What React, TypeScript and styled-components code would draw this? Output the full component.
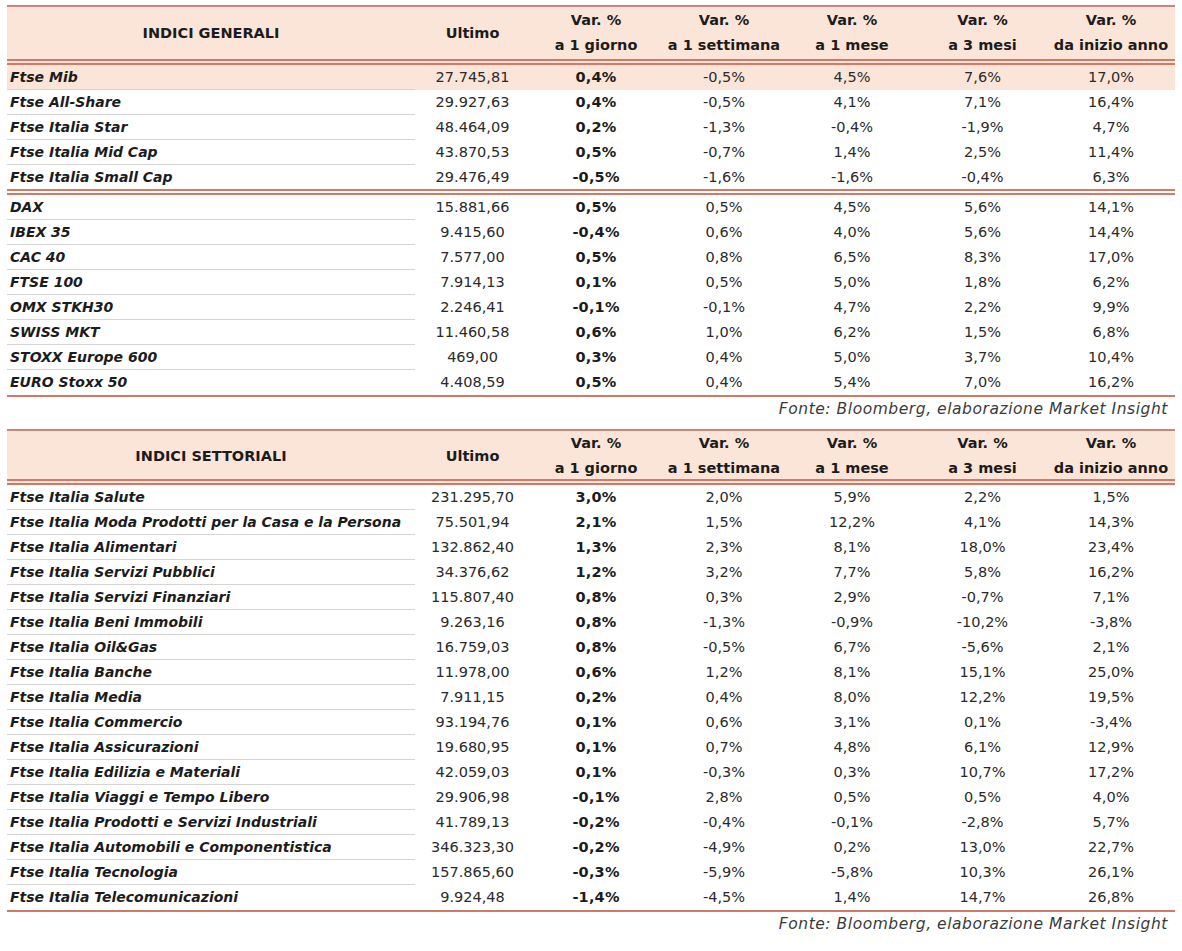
import styled, { createGlobalStyle } from 'styled-components'

const GlobalStyle = createGlobalStyle`
  html, body {
    margin: 0;
    padding: 0;
    background: #ffffff;
  }
  body {
    font-family: 'DejaVu Sans', 'Liberation Sans', sans-serif;
    color: #1c1c1c;
  }
`

const colors = {
  line: '#d27a68',
  lineTop: '#c98677',
  headerBg: '#fbe5d8',
  rowSep: '#d4d4d4',
  text: '#1c1c1c',
  number: '#2a2a2a',
}

const COLS = '408px 115px 132px 124px 132px 129px 128px'

const Page = styled.div`
  width: 1168px;
  padding: 5px 0 0 7px;
  display: flex;
  flex-direction: column;
`

const Table = styled.div`
  display: flex;
  flex-direction: column;
  border-top: 2px solid ${colors.lineTop};
  border-bottom: 2px solid ${colors.line};
`

const HeaderRow = styled.div<{ $height: number }>`
  display: grid;
  grid-template-columns: ${COLS};
  height: ${({ $height }) => $height}px;
  background: ${colors.headerBg};
  border-bottom: 6px double ${colors.line};
`

const HeaderCell = styled.div`
  display: flex;
  flex-direction: column;
  align-items: center;
  justify-content: center;
  font-size: 14.5px;
  font-weight: 700;
  line-height: 25px;
  color: ${colors.text};
  white-space: nowrap;
`

const Row = styled.div<{ $highlight?: boolean; $divider?: boolean }>`
  display: grid;
  grid-template-columns: ${COLS};
  height: ${({ $divider }) => ($divider ? '30px' : '25px')};
  box-sizing: border-box;
  background: ${({ $highlight }) => ($highlight ? colors.headerBg : 'transparent')};
  border-bottom: ${({ $divider }) => ($divider ? `6px double ${colors.line}` : 'none')};
`

const NameCell = styled.div<{ $sep: boolean }>`
  display: flex;
  align-items: center;
  padding-left: 3px;
  box-sizing: border-box;
  height: 25px;
  font-size: 14px;
  font-weight: 700;
  font-style: italic;
  color: ${colors.text};
  white-space: nowrap;
  border-bottom: 1px solid ${({ $sep }) => ($sep ? colors.rowSep : 'transparent')};
`

const NumCell = styled.div<{ $bold?: boolean }>`
  display: flex;
  align-items: center;
  justify-content: center;
  height: 24px;
  font-size: 14.5px;
  font-weight: ${({ $bold }) => ($bold ? 700 : 400)};
  color: ${({ $bold }) => ($bold ? colors.text : colors.number)};
  letter-spacing: ${({ $bold }) => ($bold ? '0.2px' : '0')};
`

const Source = styled.div`
  height: 24px;
  padding-right: 7px;
  display: flex;
  align-items: center;
  justify-content: flex-end;
  font-size: 15.5px;
  letter-spacing: 0.55px;
  font-style: italic;
  color: #3a3a3a;
`

const Spacer = styled.div`
  height: 8px;
`

type Line = [string, string, string, string, string, string, string]

const generali: Line[] = [
  ['Ftse Mib', '27.745,81', '0,4%', '-0,5%', '4,5%', '7,6%', '17,0%'],
  ['Ftse All-Share', '29.927,63', '0,4%', '-0,5%', '4,1%', '7,1%', '16,4%'],
  ['Ftse Italia Star', '48.464,09', '0,2%', '-1,3%', '-0,4%', '-1,9%', '4,7%'],
  ['Ftse Italia Mid Cap', '43.870,53', '0,5%', '-0,7%', '1,4%', '2,5%', '11,4%'],
  ['Ftse Italia Small Cap', '29.476,49', '-0,5%', '-1,6%', '-1,6%', '-0,4%', '6,3%'],
  ['DAX', '15.881,66', '0,5%', '0,5%', '4,5%', '5,6%', '14,1%'],
  ['IBEX 35', '9.415,60', '-0,4%', '0,6%', '4,0%', '5,6%', '14,4%'],
  ['CAC 40', '7.577,00', '0,5%', '0,8%', '6,5%', '8,3%', '17,0%'],
  ['FTSE 100', '7.914,13', '0,1%', '0,5%', '5,0%', '1,8%', '6,2%'],
  ['OMX STKH30', '2.246,41', '-0,1%', '-0,1%', '4,7%', '2,2%', '9,9%'],
  ['SWISS MKT', '11.460,58', '0,6%', '1,0%', '6,2%', '1,5%', '6,8%'],
  ['STOXX Europe 600', '469,00', '0,3%', '0,4%', '5,0%', '3,7%', '10,4%'],
  ['EURO Stoxx 50', '4.408,59', '0,5%', '0,4%', '5,4%', '7,0%', '16,2%'],
]

const settoriali: Line[] = [
  ['Ftse Italia Salute', '231.295,70', '3,0%', '2,0%', '5,9%', '2,2%', '1,5%'],
  ['Ftse Italia Moda Prodotti per la Casa e la Persona', '75.501,94', '2,1%', '1,5%', '12,2%', '4,1%', '14,3%'],
  ['Ftse Italia Alimentari', '132.862,40', '1,3%', '2,3%', '8,1%', '18,0%', '23,4%'],
  ['Ftse Italia Servizi Pubblici', '34.376,62', '1,2%', '3,2%', '7,7%', '5,8%', '16,2%'],
  ['Ftse Italia Servizi Finanziari', '115.807,40', '0,8%', '0,3%', '2,9%', '-0,7%', '7,1%'],
  ['Ftse Italia Beni Immobili', '9.263,16', '0,8%', '-1,3%', '-0,9%', '-10,2%', '-3,8%'],
  ['Ftse Italia Oil&Gas', '16.759,03', '0,8%', '-0,5%', '6,7%', '-5,6%', '2,1%'],
  ['Ftse Italia Banche', '11.978,00', '0,6%', '1,2%', '8,1%', '15,1%', '25,0%'],
  ['Ftse Italia Media', '7.911,15', '0,2%', '0,4%', '8,0%', '12,2%', '19,5%'],
  ['Ftse Italia Commercio', '93.194,76', '0,1%', '0,6%', '3,1%', '0,1%', '-3,4%'],
  ['Ftse Italia Assicurazioni', '19.680,95', '0,1%', '0,7%', '4,8%', '6,1%', '12,9%'],
  ['Ftse Italia Edilizia e Materiali', '42.059,03', '0,1%', '-0,3%', '0,3%', '10,7%', '17,2%'],
  ['Ftse Italia Viaggi e Tempo Libero', '29.906,98', '-0,1%', '2,8%', '0,5%', '0,5%', '4,0%'],
  ['Ftse Italia Prodotti e Servizi Industriali', '41.789,13', '-0,2%', '-0,4%', '-0,1%', '-2,8%', '5,7%'],
  ['Ftse Italia Automobili e Componentistica', '346.323,30', '-0,2%', '-4,9%', '0,2%', '13,0%', '22,7%'],
  ['Ftse Italia Tecnologia', '157.865,60', '-0,3%', '-5,9%', '-5,8%', '10,3%', '26,1%'],
  ['Ftse Italia Telecomunicazioni', '9.924,48', '-1,4%', '-4,5%', '1,4%', '14,7%', '26,8%'],
]

const periods = ['a 1 giorno', 'a 1 settimana', 'a 1 mese', 'a 3 mesi', 'da inizio anno']

function IndexTable({
  title,
  rows,
  headerHeight,
  highlightFirst,
  dividerAfter,
}: {
  title: string
  rows: Line[]
  headerHeight: number
  highlightFirst?: boolean
  dividerAfter?: number
}) {
  return (
    <Table>
      <HeaderRow $height={headerHeight}>
        <HeaderCell>{title}</HeaderCell>
        <HeaderCell>Ultimo</HeaderCell>
        {periods.map((p) => (
          <HeaderCell key={p}>
            <span>Var. %</span>
            <span>{p}</span>
          </HeaderCell>
        ))}
      </HeaderRow>
      {rows.map((r, i) => {
        const divider = dividerAfter === i
        const last = i === rows.length - 1
        return (
          <Row key={r[0]} $highlight={highlightFirst && i === 0} $divider={divider}>
            <NameCell $sep={!divider && !last}>{r[0]}</NameCell>
            <NumCell>{r[1]}</NumCell>
            <NumCell $bold>{r[2]}</NumCell>
            {r.slice(3).map((v, j) => (
              <NumCell key={j}>{v}</NumCell>
            ))}
          </Row>
        )
      })}
    </Table>
  )
}

export default function App() {
  return (
    <>
      <GlobalStyle />
      <Page>
        <IndexTable title="INDICI GENERALI" rows={generali} headerHeight={52} highlightFirst dividerAfter={4} />
        <Source>Fonte: Bloomberg, elaborazione Market Insight</Source>
        <Spacer />
        <IndexTable title="INDICI SETTORIALI" rows={settoriali} headerHeight={48} />
        <Source>Fonte: Bloomberg, elaborazione Market Insight</Source>
      </Page>
    </>
  )
}
